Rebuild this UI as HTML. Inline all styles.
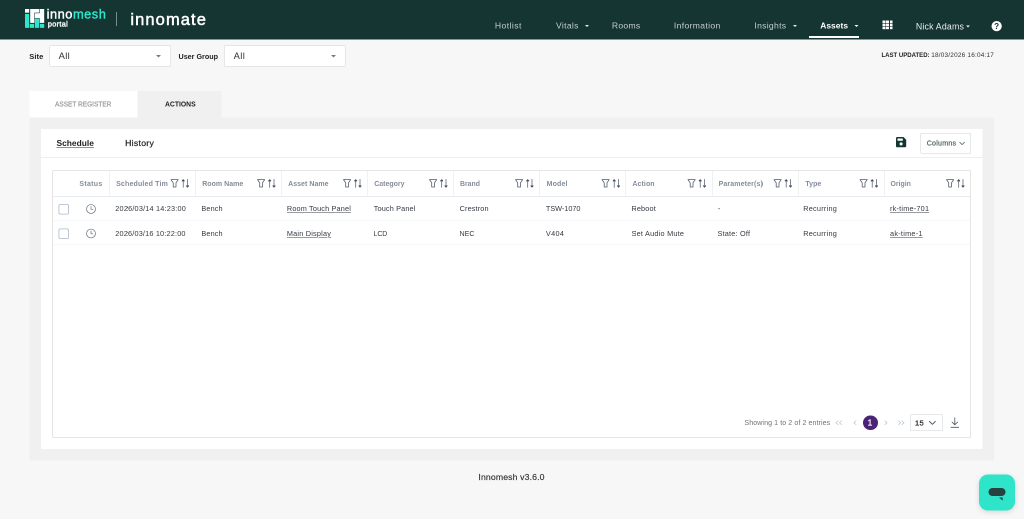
<!DOCTYPE html>
<html lang="en">
<head>
<meta charset="utf-8">
<title>Innomesh Portal</title>
<style>
*{box-sizing:border-box;margin:0;padding:0}
html,body{width:1024px;height:519px;overflow:hidden}
body{background:#f7f7f7;font-family:"Liberation Sans",sans-serif;color:#222;position:relative}
#z{will-change:transform;position:absolute;left:0;top:0;width:2048px;height:1038px;transform:scale(.5);transform-origin:0 0}
.a,.t,svg{position:absolute}
.t{white-space:nowrap;line-height:24px}
.u{text-decoration:underline;text-decoration-thickness:1px;text-underline-offset:1.6px}
svg{overflow:visible}
.caret{width:0;height:0;border-left:4.4px solid transparent;border-right:4.4px solid transparent;border-top:4.8px solid #e8eeed}
.caret.s{border-left-width:5px;border-right-width:5px;border-top-width:5px}
.sel{background:#fff;border:1px solid #d2d2d2;border-radius:2px}
.vl{top:342px;width:1px;height:50px;background:#dfe3e8}
.hl{left:106px;width:1835px;height:1px;background:#ebedf0}
.cb{left:117px;width:21px;height:21px;border:2px solid #c6d0dd;border-radius:3.6px;background:#fff}
</style>
</head>
<body>
<div id="z">
<div class="a" style="left:0;top:0;width:2048px;height:78.8px;background:#143532"></div>

<!-- logo -->
<svg style="left:50px;top:18px" width="38.4" height="37.8" viewBox="0 0 19.2 18.900">
  <rect x="0" y="0" width="4.200" height="3.700" fill="#fff"/>
  <rect x="0" y="4.900" width="4.200" height="14" fill="#2ee6cb"/>
  <rect x="5.200" y="0" width="14" height="13.900" fill="#fff"/>
  <path d="M9.600 3.800V9.600M9.600 3.900H14.600M14.600 0V4" stroke="#143532" stroke-width=".6" stroke-opacity=".9" fill="none"/>
  <rect x="9.400" y="9.100" width="5.300" height="4.800" fill="#143532"/>
  <rect x="9.900" y="9.600" width="4.300" height="9.300" fill="#2ee6cb"/>
  <rect x="4.900" y="14.900" width="4.200" height="4" fill="#2ee6cb"/>
  <rect x="15" y="14.900" width="4.200" height="4" fill="#2ee6cb"/>
</svg>
<div class="a" style="left:232px;top:24px;width:2px;height:28px;background:#7d8d8b"></div>

<!-- nav shapes -->
<div class="a caret" style="left:1169.8px;top:49.6px"></div>
<div class="a caret" style="left:1585.8px;top:49.6px"></div>
<div class="a caret" style="left:1709.4px;top:49.6px;border-top-color:#fff"></div>
<div class="a" style="left:1618.4px;top:72px;width:99.8px;height:3.6px;background:#fff"></div>
<svg style="left:1765px;top:40.6px" width="20" height="17.4" viewBox="0 0 10 8.700"><g fill="#fff"><rect x="0" y="0" width="3" height="2.500"/><rect x="3.5" y="0" width="3" height="2.500"/><rect x="7.0" y="0" width="3" height="2.500"/><rect x="0" y="3.1" width="3" height="2.500"/><rect x="3.5" y="3.1" width="3" height="2.500"/><rect x="7.0" y="3.1" width="3" height="2.500"/><rect x="0" y="6.2" width="3" height="2.500"/><rect x="3.5" y="6.2" width="3" height="2.500"/><rect x="7.0" y="6.2" width="3" height="2.500"/></g></svg>
<div class="a caret" style="left:1931.6px;top:51.2px;border-top-width:4.4px"></div>
<svg style="left:1982.8px;top:41.5px" width="20.6" height="20.6" viewBox="0 0 10.300 10.300">
  <circle cx="5.150" cy="5.150" r="5.150" fill="#fff"/>
  <text x="5.150" y="8.100" text-anchor="middle" font-family="Liberation Sans, sans-serif" font-weight="bold" font-size="8.200" fill="#143532">?</text>
</svg>

<!-- filters -->
<div class="a sel" style="left:98.6px;top:90.6px;width:243px;height:42.4px"></div>
<div class="a sel" style="left:448px;top:90.6px;width:243px;height:42.4px"></div>
<div class="a caret s" style="left:312.4px;top:110.4px;border-top-color:#7a7a7a"></div>
<div class="a caret s" style="left:662px;top:110.4px;border-top-color:#7a7a7a"></div>

<!-- tabs / panel -->
<div class="a" style="left:59.2px;top:182px;width:215.4px;height:54px;background:#fff"></div>
<div class="a" style="left:274.6px;top:182px;width:168px;height:54px;background:#f0f0f0"></div>
<div class="a" style="left:59.2px;top:235px;width:1928.4px;height:686px;background:#f0f0f0"></div>
<div class="a" style="left:82px;top:258px;width:1882.8px;height:640px;background:#fff"></div>
<div class="a" style="left:82px;top:313.8px;width:1882.8px;height:1px;background:#d9dde2"></div>

<!-- save + columns -->
<svg style="left:1791.8px;top:274.4px" width="20.4" height="20.6" viewBox="0 0 10.200 10.300">
  <path d="M1.300 0h6.200l2.700 2.700v6.300a1.300 1.300 0 0 1-1.300 1.300H1.300A1.300 1.300 0 0 1 0 9V1.300A1.300 1.300 0 0 1 1.300 0z" fill="#143532"/>
  <rect x="1.500" y="1.500" width="5.300" height="2.300" rx=".3" fill="#fff"/>
  <circle cx="5.100" cy="6.900" r="1.550" fill="#fff"/>
</svg>
<div class="a" style="left:1840.6px;top:266.4px;width:101px;height:41px;border:1px solid #cdd3da;background:#fff;border-radius:2px"></div>
<svg style="left:1918.6px;top:283.6px" width="10.4" height="6" viewBox="0 0 5.200 3"><path d="M.3.300L2.600 2.600 4.900.3" fill="none" stroke="#4a6461" stroke-width=".75" stroke-linecap="round" stroke-linejoin="round"/></svg>

<!-- table -->
<div class="a" style="left:105px;top:341px;width:1836px;height:534px;border:1px solid #cfcbca;background:#fff"></div>
<div class="a hl" style="top:392px;background:#d0d8e2"></div>
<div class="a hl" style="top:440px"></div>
<div class="a hl" style="top:489px"></div>
<svg width="0" height="0" style="left:0;top:0"><defs>
<g id="fic"><path d="M.5.600H7.700L5.500 3.800V8H2.700V3.800z" fill="none" stroke="#4f596a" stroke-width=".78" stroke-linejoin="round"/></g>
<g id="sic"><path d="M1.700 8.400V.800M6 .300V7.900" fill="none" stroke="#4f596a" stroke-width=".72" stroke-linecap="round"/><path d="M.700 2L1.700 .800 2.700 2M5 6.800L6 8 7 6.800" fill="none" stroke="#3b4556" stroke-width="1" stroke-linecap="round" stroke-linejoin="round"/></g>
<g id="clk"><circle cx="5" cy="5" r="4.450" fill="none" stroke="#656e7b" stroke-width=".7"/><path d="M5 2.500V5.300H6.900" fill="none" stroke="#656e7b" stroke-width=".7" stroke-linecap="round" stroke-linejoin="round"/></g>
<g id="cbx"><rect x=".4" y=".4" width="9.700" height="9.700" rx="1.500" fill="#fff" stroke="#adb9ca" stroke-width=".8"/></g>
</defs></svg>
<div class="a vl" style="left:218px"></div>
<div class="a vl" style="left:390.2px"></div>
<div class="a vl" style="left:562.4px"></div>
<div class="a vl" style="left:734.8px"></div>
<div class="a vl" style="left:907px"></div>
<div class="a vl" style="left:1079.2px"></div>
<div class="a vl" style="left:1251.4px"></div>
<div class="a vl" style="left:1423.6px"></div>
<div class="a vl" style="left:1596px"></div>
<div class="a vl" style="left:1768.2px"></div>
<svg style="left:341.4px;top:358.2px" width="16.4" height="17.6" viewBox="0 0 8.200 8.800"><use href="#fic"/></svg>
<svg style="left:363.4px;top:358.2px" width="16" height="17.6" viewBox="0 0 8 8.800"><use href="#sic"/></svg>
<svg style="left:513.6px;top:358.2px" width="16.4" height="17.6" viewBox="0 0 8.200 8.800"><use href="#fic"/></svg>
<svg style="left:535.6px;top:358.2px" width="16" height="17.6" viewBox="0 0 8 8.800"><use href="#sic"/></svg>
<svg style="left:686px;top:358.2px" width="16.4" height="17.6" viewBox="0 0 8.200 8.800"><use href="#fic"/></svg>
<svg style="left:708px;top:358.2px" width="16" height="17.6" viewBox="0 0 8 8.800"><use href="#sic"/></svg>
<svg style="left:858.2px;top:358.2px" width="16.4" height="17.6" viewBox="0 0 8.200 8.800"><use href="#fic"/></svg>
<svg style="left:880.2px;top:358.2px" width="16" height="17.6" viewBox="0 0 8 8.800"><use href="#sic"/></svg>
<svg style="left:1030.4px;top:358.2px" width="16.4" height="17.6" viewBox="0 0 8.200 8.800"><use href="#fic"/></svg>
<svg style="left:1052.4px;top:358.2px" width="16" height="17.6" viewBox="0 0 8 8.800"><use href="#sic"/></svg>
<svg style="left:1202.6px;top:358.2px" width="16.4" height="17.6" viewBox="0 0 8.200 8.800"><use href="#fic"/></svg>
<svg style="left:1224.6px;top:358.2px" width="16" height="17.6" viewBox="0 0 8 8.800"><use href="#sic"/></svg>
<svg style="left:1374.8px;top:358.2px" width="16.4" height="17.6" viewBox="0 0 8.200 8.800"><use href="#fic"/></svg>
<svg style="left:1396.8px;top:358.2px" width="16" height="17.6" viewBox="0 0 8 8.800"><use href="#sic"/></svg>
<svg style="left:1547.2px;top:358.2px" width="16.4" height="17.6" viewBox="0 0 8.200 8.800"><use href="#fic"/></svg>
<svg style="left:1569.2px;top:358.2px" width="16" height="17.6" viewBox="0 0 8 8.800"><use href="#sic"/></svg>
<svg style="left:1719.4px;top:358.2px" width="16.4" height="17.6" viewBox="0 0 8.200 8.800"><use href="#fic"/></svg>
<svg style="left:1741.4px;top:358.2px" width="16" height="17.6" viewBox="0 0 8 8.800"><use href="#sic"/></svg>
<svg style="left:1891.6px;top:358.2px" width="16.4" height="17.6" viewBox="0 0 8.200 8.800"><use href="#fic"/></svg>
<svg style="left:1913.6px;top:358.2px" width="16" height="17.6" viewBox="0 0 8 8.800"><use href="#sic"/></svg>
<svg style="left:117px;top:407.8px" width="21" height="21" viewBox="0 0 10.500 10.500"><use href="#cbx"/></svg>
<svg style="left:117px;top:456.8px" width="21" height="21" viewBox="0 0 10.500 10.500"><use href="#cbx"/></svg>
<svg style="left:172.4px;top:408px" width="20" height="20" viewBox="0 0 10 10"><use href="#clk"/></svg>
<svg style="left:172.4px;top:456.8px" width="20" height="20" viewBox="0 0 10 10"><use href="#clk"/></svg>

<!-- paginator -->
<svg style="left:1671.4px;top:841.2px" width="13.2" height="8.8" viewBox="0 0 6.600 4.400"><path d="M2.700.300L.500 2.200l2.200 1.900M6.100.300L3.900 2.200l2.200 1.900" fill="none" stroke="#b9bfc8" stroke-width=".65" stroke-linecap="round" stroke-linejoin="round"/></svg>
<svg style="left:1706.8px;top:841.2px" width="6" height="8.8" viewBox="0 0 3 4.400"><path d="M2.600.300L.400 2.200l2.200 1.900" fill="none" stroke="#b9bfc8" stroke-width=".65" stroke-linecap="round" stroke-linejoin="round"/></svg>
<div class="a" style="left:1726.4px;top:831px;width:29.2px;height:29.2px;border-radius:50%;background:#4a2377"></div>
<svg style="left:1769.2px;top:841.2px" width="6" height="8.8" viewBox="0 0 3 4.400"><path d="M.400.300l2.200 1.900L.400 4.100" fill="none" stroke="#b9bfc8" stroke-width=".65" stroke-linecap="round" stroke-linejoin="round"/></svg>
<svg style="left:1796.2px;top:841.2px" width="13.2" height="8.8" viewBox="0 0 6.600 4.400"><path d="M.500.300l2.200 1.900L.500 4.100M3.900.300l2.200 1.900-2.200 1.900" fill="none" stroke="#b9bfc8" stroke-width=".65" stroke-linecap="round" stroke-linejoin="round"/></svg>
<div class="a" style="left:1820px;top:828.6px;width:65.6px;height:33.6px;border:1px solid #cdd3da;border-radius:2px;background:#fff"></div>
<svg style="left:1858.4px;top:842px" width="13.6" height="7.6" viewBox="0 0 6.800 3.800"><path d="M.500.500l2.900 2.800L6.300.500" fill="none" stroke="#4b5563" stroke-width=".95" stroke-linecap="round" stroke-linejoin="round"/></svg>
<svg style="left:1900.6px;top:835.2px" width="17.2" height="20.4" viewBox="0 0 8.600 10.200"><path d="M4.300.400v6.800M1.500 4.500l2.800 2.800 2.800-2.800M.400 9.800h7.800" fill="none" stroke="#4b5563" stroke-width=".8" stroke-linecap="round" stroke-linejoin="round"/></svg>

<!-- chat -->
<div class="a" style="left:1957.8px;top:948.6px;width:72.4px;height:72.6px;border-radius:18px;background:#2fe5c9;box-shadow:0 3px 12px rgba(0,0,0,.14)"></div>
<div class="a" style="left:1977px;top:975.6px;width:34px;height:16.6px;border-radius:8.3px;background:#27433f"></div>
<svg style="left:1997.6px;top:995.2px" width="7.4" height="6.2" viewBox="0 0 3.700 3.100"><path d="M0 0h3.700v3.100z" fill="#27433f"/></svg>

<div class="t" style="left:93.2px;top:16px;font-size:25.6px;color:#fff;letter-spacing:1.08px;-webkit-text-stroke:.8px #fff;">inno<span style="color:#2ee6cb;-webkit-text-stroke-color:#2ee6cb">mesh</span></div>
<div class="t" style="left:95.8px;top:36px;font-size:14.6px;color:#fff;letter-spacing:.66px;-webkit-text-stroke:.8px #fff;">portal</div>
<div class="t" style="left:260.8px;top:27px;font-size:33px;color:#fff;letter-spacing:2.18px;-webkit-text-stroke:1px #fff;">innomate</div>
<div class="t" style="left:989.8px;top:39px;font-size:17.2px;color:#c6d0ce;letter-spacing:.86px;">Hotlist</div>
<div class="t" style="left:1112px;top:39px;font-size:17.2px;color:#c6d0ce;letter-spacing:.64px;">Vitals</div>
<div class="t" style="left:1223.8px;top:39px;font-size:17.2px;color:#c6d0ce;letter-spacing:.52px;">Rooms</div>
<div class="t" style="left:1347.8px;top:39px;font-size:17.2px;color:#c6d0ce;letter-spacing:.68px;">Information</div>
<div class="t" style="left:1508.8px;top:39px;font-size:17.2px;color:#c6d0ce;letter-spacing:.58px;">Insights</div>
<div class="t" style="left:1640.4px;top:40px;font-size:16.8px;color:#fff;letter-spacing:.14px;font-weight:bold;">Assets</div>
<div class="t" style="left:1831.8px;top:41px;font-size:17.6px;color:#ecf0ef;letter-spacing:.34px;">Nick Adams</div>
<div class="t" style="left:58.6px;top:101px;font-size:15px;color:#222;letter-spacing:.16px;font-weight:bold;">Site</div>
<div class="t" style="left:117.2px;top:100px;font-size:18.8px;color:#333;letter-spacing:.72px;">All</div>
<div class="t" style="left:357.4px;top:101px;font-size:15px;color:#222;transform:scaleX(0.958);transform-origin:0 50%;font-weight:bold;">User Group</div>
<div class="t" style="left:467.2px;top:100px;font-size:18.8px;color:#333;letter-spacing:.76px;">All</div>
<div class="t" style="left:1762.6px;top:98px;font-size:12.8px;color:#222;transform:scaleX(0.941);transform-origin:0 50%;font-weight:bold;">LAST UPDATED:</div>
<div class="t" style="left:1862.4px;top:98px;font-size:12.8px;color:#333;letter-spacing:.44px;">18/03/2026 16:04:17</div>
<div class="t" style="left:110.2px;top:196px;font-size:14px;color:#a4a4a4;transform:scaleX(0.931);transform-origin:0 50%;-webkit-text-stroke:.6px #a4a4a4;">ASSET REGISTER</div>
<div class="t" style="left:329.6px;top:196px;font-size:14px;color:#222;transform:scaleX(0.972);transform-origin:0 50%;font-weight:bold;">ACTIONS</div>
<div class="t u" style="left:113px;top:274px;font-size:17.2px;color:#1f1f1f;transform:scaleX(0.978);transform-origin:0 50%;font-weight:bold;">Schedule</div>
<div class="t" style="left:250.2px;top:274px;font-size:17.4px;color:#222;letter-spacing:.56px;-webkit-text-stroke:.4px #222;">History</div>
<div class="t" style="left:1853.4px;top:274px;font-size:14.2px;color:#506b68;letter-spacing:.46px;-webkit-text-stroke:.5px #506b68;">Columns</div>
<div class="t" style="left:1488.8px;top:833px;font-size:14.2px;color:#737373;letter-spacing:.14px;">Showing 1 to 2 of 2 entries</div>
<div class="t" style="left:1735.2px;top:834px;font-size:16.8px;color:#fff;-webkit-text-stroke:.5px #fff;">1</div>
<div class="t" style="left:1830px;top:834px;font-size:15px;color:#333;letter-spacing:.78px;-webkit-text-stroke:.6px #333;">15</div>
<div class="t" style="left:956.8px;top:942px;font-size:17.4px;color:#333;letter-spacing:.26px;-webkit-text-stroke:.3px #333;">Innomesh v3.6.0</div>
<div class="t" style="left:232.2px;top:355px;font-size:14px;color:#858d9a;letter-spacing:.34px;font-weight:bold;width:102.6px;overflow:hidden;">Scheduled Time</div>
<div class="t" style="left:158.8px;top:355px;font-size:14px;color:#858d9a;letter-spacing:.58px;font-weight:bold;">Status</div>
<div class="t" style="left:404.4px;top:355px;font-size:14px;color:#858d9a;letter-spacing:.06px;font-weight:bold;">Room Name</div>
<div class="t" style="left:576.2px;top:355px;font-size:14px;color:#858d9a;letter-spacing:.08px;font-weight:bold;">Asset Name</div>
<div class="t" style="left:748.4px;top:355px;font-size:14px;color:#858d9a;font-weight:bold;">Category</div>
<div class="t" style="left:920.4px;top:355px;font-size:14px;color:#858d9a;transform:scaleX(0.984);transform-origin:0 50%;font-weight:bold;">Brand</div>
<div class="t" style="left:1093.2px;top:355px;font-size:14px;color:#858d9a;letter-spacing:.32px;font-weight:bold;">Model</div>
<div class="t" style="left:1264.8px;top:355px;font-size:14px;color:#858d9a;letter-spacing:.16px;font-weight:bold;">Action</div>
<div class="t" style="left:1437.2px;top:355px;font-size:14px;color:#858d9a;letter-spacing:.26px;font-weight:bold;">Parameter(s)</div>
<div class="t" style="left:1610.8px;top:355px;font-size:14px;color:#858d9a;letter-spacing:.02px;font-weight:bold;">Type</div>
<div class="t" style="left:1781.4px;top:355px;font-size:14px;color:#858d9a;transform:scaleX(0.986);transform-origin:0 50%;font-weight:bold;">Origin</div>
<div class="t" style="left:230.6px;top:405px;font-size:14.6px;color:#353a43;letter-spacing:.4px;">2026/03/14 14:23:00</div>
<div class="t" style="left:402.8px;top:405px;font-size:14.6px;color:#353a43;letter-spacing:.26px;">Bench</div>
<div class="t u" style="left:573.8px;top:405px;font-size:14.6px;color:#353a43;letter-spacing:.32px;">Room Touch Panel</div>
<div class="t" style="left:747.4px;top:405px;font-size:14.6px;color:#353a43;letter-spacing:.3px;">Touch Panel</div>
<div class="t" style="left:919.2px;top:405px;font-size:14.6px;color:#353a43;letter-spacing:.28px;">Crestron</div>
<div class="t" style="left:1091.8px;top:405px;font-size:14.6px;color:#353a43;letter-spacing:-0.06px;">TSW-1070</div>
<div class="t" style="left:1262.8px;top:405px;font-size:14.6px;color:#353a43;letter-spacing:.32px;">Reboot</div>
<div class="t" style="left:1435.8px;top:405px;font-size:14.6px;color:#353a43;">-</div>
<div class="t" style="left:1606.4px;top:405px;font-size:14.6px;color:#353a43;letter-spacing:.5px;">Recurring</div>
<div class="t u" style="left:1780px;top:405px;font-size:14.6px;color:#353a43;letter-spacing:.42px;">rk-time-701</div>
<div class="t" style="left:230.6px;top:455px;font-size:14.6px;color:#353a43;letter-spacing:.36px;">2026/03/16 10:22:00</div>
<div class="t" style="left:402.8px;top:455px;font-size:14.6px;color:#353a43;letter-spacing:.26px;">Bench</div>
<div class="t u" style="left:573.8px;top:455px;font-size:14.6px;color:#353a43;letter-spacing:.4px;">Main Display</div>
<div class="t" style="left:747.4px;top:455px;font-size:14.6px;color:#353a43;transform:scaleX(0.943);transform-origin:0 50%;">LCD</div>
<div class="t" style="left:918.6px;top:455px;font-size:14.6px;color:#353a43;transform:scaleX(0.978);transform-origin:0 50%;">NEC</div>
<div class="t" style="left:1091.8px;top:455px;font-size:14.6px;color:#353a43;letter-spacing:.64px;">V404</div>
<div class="t" style="left:1263px;top:455px;font-size:14.6px;color:#353a43;letter-spacing:.46px;">Set Audio Mute</div>
<div class="t" style="left:1435px;top:455px;font-size:14.6px;color:#353a43;letter-spacing:.4px;">State: Off</div>
<div class="t" style="left:1606.4px;top:455px;font-size:14.6px;color:#353a43;letter-spacing:.5px;">Recurring</div>
<div class="t u" style="left:1780px;top:455px;font-size:14.6px;color:#353a43;letter-spacing:.52px;">ak-time-1</div>
</div>
</body>
</html>
